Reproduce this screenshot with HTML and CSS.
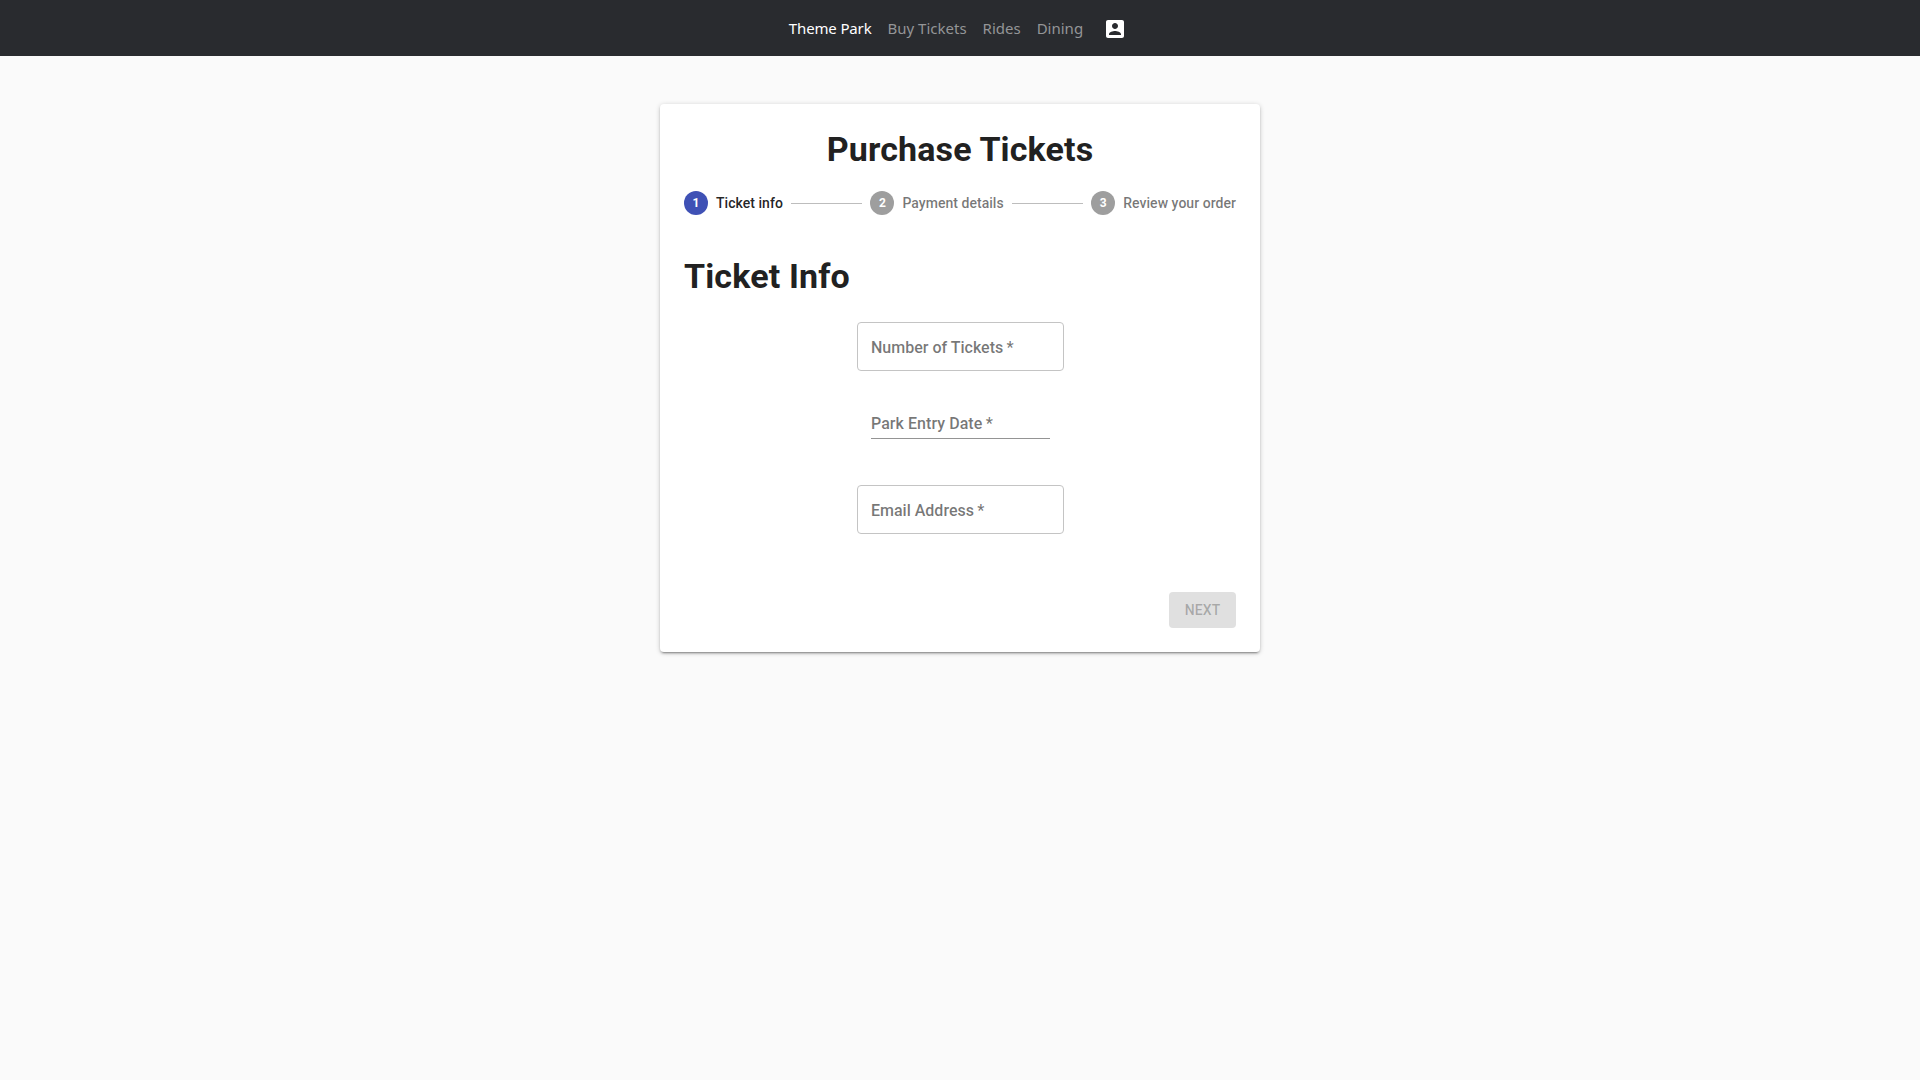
FILE: index.html
```html
<!DOCTYPE html>
<html lang="en">
<head>
<meta charset="utf-8">
<title>Theme Park</title>
<link rel="stylesheet" href="styles.css">
</head>
<body>
<nav class="navbar">
  <a class="brand">Theme Park</a>
  <a class="link link-buy">Buy Tickets</a>
  <a class="link link-rides">Rides</a>
  <a class="link link-dining">Dining</a>
  <svg class="account" viewBox="0 0 24 24"><path d="M3 5v14c0 1.1.89 2 2 2h14c1.1 0 2-.9 2-2V5c0-1.1-.9-2-2-2H5c-1.11 0-2 .9-2 2zm12 4c0 1.66-1.34 3-3 3s-3-1.34-3-3 1.34-3 3-3 3 1.34 3 3zm-9 8c0-2 4-3.1 6-3.1s6 1.1 6 3.1v1H6v-1z"/></svg>
</nav>
<main class="paper">
  <h1 class="title">Purchase Tickets</h1>
  <div class="stepper">
    <div class="step active"><span class="num">1</span><span class="label">Ticket info</span></div>
    <div class="connector"></div>
    <div class="step"><span class="num">2</span><span class="label">Payment details</span></div>
    <div class="connector"></div>
    <div class="step"><span class="num">3</span><span class="label">Review your order</span></div>
  </div>
  <h2 class="subtitle">Ticket Info</h2>
  <form class="form">
    <div class="outlined">Number of Tickets&thinsp;*</div>
    <div class="underlined">Park Entry Date&thinsp;*</div>
    <div class="outlined">Email Address&thinsp;*</div>
  </form>
  <div class="actions"><button class="next" disabled>NEXT</button></div>
</main>
</body>
</html>
```

FILE: styles.css
```css
* { box-sizing: border-box; }
body { margin: 0; min-height: 100vh; background: #fafafa; font-family: Roboto, sans-serif; color: #212121; }
.navbar { height: 56px; background: #292b2f; display: flex; align-items: center; justify-content: center; font: 15px/24px "Noto Sans", sans-serif; color: #949597; gap: 16px; padding-right: 4px; }
.brand { color: #fff; letter-spacing: -.15px; }
.account { width: 24px; height: 24px; fill: #fff; margin: 2px 0 0 4px; }
.paper { width: 600px; height: 548px; margin: 48px auto 0; padding: 24px; background: #fff; border-radius: 4px; box-shadow: 0 3px 1px -2px rgba(0,0,0,.2), 0 2px 2px 0 rgba(0,0,0,.14), 0 1px 5px 0 rgba(0,0,0,.2); }
.title, .subtitle { margin: 0; font-size: 34px; line-height: 42px; font-weight: 700; letter-spacing: .14px; }
.title { text-align: center; }
.stepper { display: flex; align-items: center; margin-top: 21px; height: 24px; }
.step { display: flex; align-items: center; gap: 8px; color: rgba(0,0,0,.54); font-size: 14px; font-weight: 500; letter-spacing: .04px; }
.num { width: 24px; height: 24px; border-radius: 50%; background: #9e9e9e; color: #fff; font-size: 12px; font-weight: 700; line-height: 24px; text-align: center; }
.active { color: rgba(0,0,0,.87); }
.active .num { background: #3f51b5; }
.connector { flex: 1; height: 1px; background: #bdbdbd; margin: 1px 8px 0; }
.subtitle { margin-top: 40px; }
.form { width: 207px; margin: 25px 0 0 173px; font-size: 16px; font-weight: 500; color: rgba(0,0,0,.54); letter-spacing: 0; }
.outlined { height: 49px; border: 1px solid #c4c4c4; border-radius: 4px; line-height: 49px; padding-left: 13px; }
.underlined { height: 32px; margin: 36px 14px 46px; line-height: 33px; letter-spacing: .05px; border-bottom: 1px solid #949494; }
.actions { display: flex; justify-content: flex-end; margin-top: 58px; }
.next { width: 67px; height: 36px; border: 0; padding: 0; border-radius: 4px; background: #e0e0e0; color: rgba(0,0,0,.26); font: 500 14px/24px Roboto, sans-serif; letter-spacing: .1px; }
```
